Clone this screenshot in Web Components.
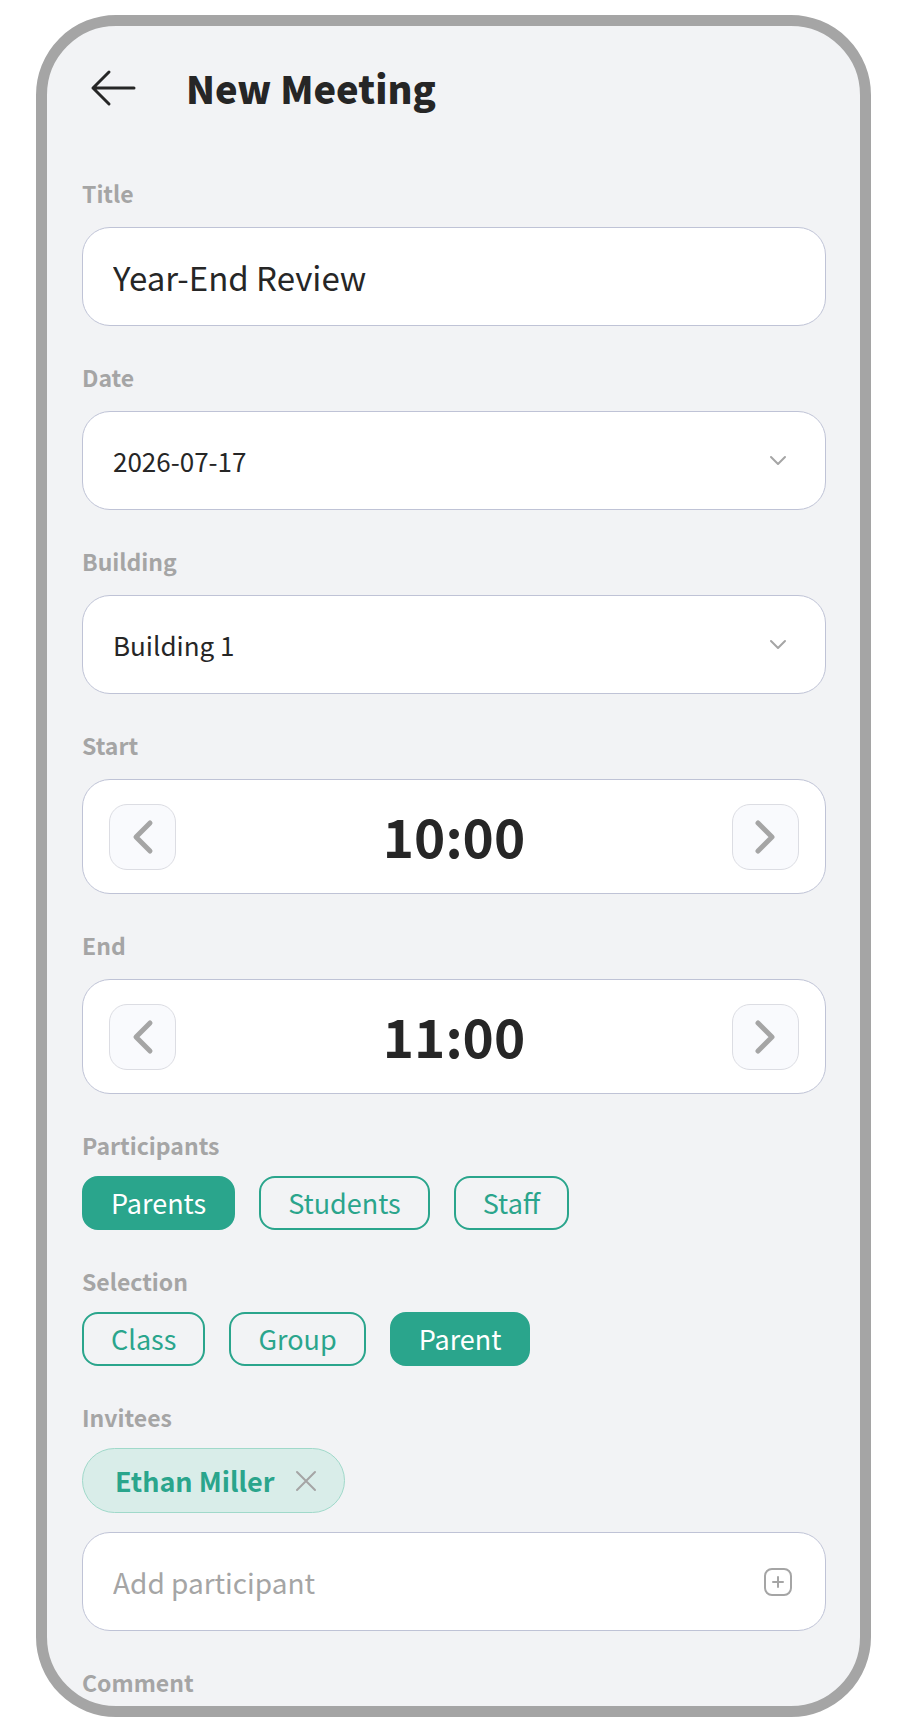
<!DOCTYPE html>
<html lang="en">
<head>
  <meta charset="utf-8">
  <meta name="viewport" content="width=device-width, initial-scale=1">
  <title>New Meeting</title>
  <style>
    body {
      --ink: #262626;
      --muted: #a5a5a5;
      --line: #bfc3d6;
      --accent: #2aa58c;
      --screen: #f2f3f5;
      margin: 0;
      background: #fff;
      color: var(--ink);
      font-family: "Noto Sans CJK SC", "Noto Sans", sans-serif;
    }
  </style>
</head>
<body>
  <phone-frame>
    <screen-header>New Meeting</screen-header>
    <text-field label="Title" value="Year-End Review"></text-field>
    <select-field label="Date" options="2026-07-17,2026-07-18,2026-07-19"></select-field>
    <select-field label="Building" options="Building 1,Building 2"></select-field>
    <time-stepper label="Start" value="10:00"></time-stepper>
    <time-stepper label="End" value="11:00"></time-stepper>
    <chip-group label="Participants">
      <toggle-chip selected>Parents</toggle-chip>
      <toggle-chip>Students</toggle-chip>
      <toggle-chip>Staff</toggle-chip>
    </chip-group>
    <chip-group label="Selection">
      <toggle-chip>Class</toggle-chip>
      <toggle-chip>Group</toggle-chip>
      <toggle-chip selected>Parent</toggle-chip>
    </chip-group>
    <chip-group label="Invitees">
      <invitee-tag>Ethan Miller</invitee-tag>
    </chip-group>
    <add-participant></add-participant>
    <comment-field label="Comment"></comment-field>
  </phone-frame>

  <script>
    // Label and box styles shared by all the form rows
    const fieldStyles = `
      :host {
        display: block;
        margin-top: 33px;
      }

      * {
        box-sizing: border-box;
      }

      .label {
        display: block;
        margin: 0 0 16px;
        color: var(--muted);
        font-size: 23px;
        font-weight: 700;
        line-height: 36px;
      }

      .box {
        display: flex;
        align-items: center;
        height: 99px;
        border: 1px solid var(--line);
        border-radius: 28px;
        background: #fff;
      }

      input, select, textarea, button {
        margin: 0;
        padding: 0;
        border: none;
        background: none;
        color: inherit;
        font-family: inherit;
      }

      button {
        cursor: pointer;
      }

      svg {
        display: block;
        fill: none;
        stroke: var(--muted);
        stroke-linecap: round;
        stroke-linejoin: round;
      }
    `;

    class PhoneFrame extends HTMLElement {
      constructor() {
        super();
        this.attachShadow({ mode: 'open' });
        this.shadowRoot.innerHTML = `
        <style>
          :host {
            display: flex;
            height: 100vh;
            padding: 15px 35px 19px 36px;
            box-sizing: border-box;
          }

          .bezel {
            display: flex;
            flex: 1;
            min-width: 0;
            overflow: hidden;
            border: 11px solid var(--muted);
            border-radius: 80px;
            background: var(--screen);
          }

          main {
            flex: 1;
            min-width: 0;
            padding: 0 34px 40px 35px;
            overflow-y: auto;
            scrollbar-width: none;
          }
        </style>

        <div class="bezel">
          <main><slot></slot></main>
        </div>
        `;
      }
    }
    customElements.define('phone-frame', PhoneFrame);

    class ScreenHeader extends HTMLElement {
      constructor() {
        super();
        this.attachShadow({ mode: 'open' });
        this.shadowRoot.innerHTML = `
        <style>
          :host {
            display: flex;
            align-items: center;
            gap: 50px;
            height: 116px;
            padding: 8px 0 0 6px;
            box-sizing: border-box;
          }

          button {
            padding: 0;
            border: none;
            background: none;
            cursor: pointer;
          }

          svg {
            display: block;
            fill: none;
            stroke: var(--ink);
            stroke-width: 3;
            stroke-linecap: round;
            stroke-linejoin: round;
          }

          h1 {
            margin: 0;
            font-size: 38px;
            font-weight: 900;
            line-height: 56px;
          }
        </style>

        <button type="button" aria-label="Back">
          <svg width="48" height="40" viewBox="0 0 48 40"><path d="M46 20H5M21 4 5 20l16 16"/></svg>
        </button>
        <h1><slot></slot></h1>
        `;
      }
    }
    customElements.define('screen-header', ScreenHeader);

    class TextField extends HTMLElement {
      constructor() {
        super();
        this.attachShadow({ mode: 'open' });
        this.shadowRoot.innerHTML = `
        <style>
          ${fieldStyles}

          input {
            flex: 1;
            min-width: 0;
            height: 100%;
            padding: 0 30px;
            border-radius: 28px;
            font-size: 33px;
          }
        </style>

        <label class="label" for="text">${this.getAttribute('label')}</label>
        <div class="box">
          <input id="text" type="text" value="${this.getAttribute('value')}">
        </div>
        `;
      }
    }
    customElements.define('text-field', TextField);

    class SelectField extends HTMLElement {
      constructor() {
        super();
        this.attachShadow({ mode: 'open' });
        const options = this.getAttribute('options').split(',');
        this.shadowRoot.innerHTML = `
        <style>
          ${fieldStyles}

          .box {
            display: grid;
          }

          select, svg {
            grid-area: 1 / 1;
          }

          select {
            width: 100%;
            height: 97px;
            padding: 0 30px;
            border-radius: 28px;
            font-size: 26px;
            appearance: none;
          }

          svg {
            justify-self: end;
            margin-right: 37px;
            pointer-events: none;
          }
        </style>

        <label class="label" for="choice">${this.getAttribute('label')}</label>
        <div class="box">
          <select id="choice">${options.map((option) => `<option>${option}</option>`).join('')}</select>
          <svg width="20" height="20" viewBox="0 0 20 20" stroke-width="2"><path d="m3 6 7 7 7-7"/></svg>
        </div>
        `;
      }
    }
    customElements.define('select-field', SelectField);

    class TimeStepper extends HTMLElement {
      constructor() {
        super();
        this.attachShadow({ mode: 'open' });
        this.shadowRoot.innerHTML = `
        <style>
          ${fieldStyles}

          .box {
            justify-content: space-between;
            height: 115px;
            padding: 0 26px;
          }

          button {
            display: grid;
            place-items: center;
            width: 67px;
            height: 66px;
            border: 1px solid #dcdde3;
            border-radius: 18px;
            background: #f9fafd;
          }

          output {
            padding-bottom: 4px;
            font-size: 53px;
            font-weight: 700;
            line-height: 72px;
          }
        </style>

        <label class="label" for="time">${this.getAttribute('label')}</label>
        <div class="box">
          <button type="button" aria-label="Earlier">
            <svg width="40" height="40" viewBox="0 0 40 40" stroke-width="5"><path d="M27 6 13 20l14 14"/></svg>
          </button>
          <output id="time">${this.getAttribute('value')}</output>
          <button type="button" aria-label="Later">
            <svg width="40" height="40" viewBox="0 0 40 40" stroke-width="5"><path d="m12 6 14 14-14 14"/></svg>
          </button>
        </div>
        `;
        this.output = this.shadowRoot.querySelector('output');
        const [earlier, later] = this.shadowRoot.querySelectorAll('button');
        earlier.addEventListener('click', () => this.step(-30));
        later.addEventListener('click', () => this.step(30));
      }

      step(minutes) {
        const [h, m] = this.output.value.split(':').map(Number);
        const total = (h * 60 + m + minutes + 1440) % 1440;
        const pad = (n) => String(n).padStart(2, '0');
        this.output.value = `${pad(Math.floor(total / 60))}:${pad(total % 60)}`;
      }
    }
    customElements.define('time-stepper', TimeStepper);

    class ChipGroup extends HTMLElement {
      constructor() {
        super();
        this.attachShadow({ mode: 'open' });
        this.shadowRoot.innerHTML = `
        <style>
          ${fieldStyles}

          .label {
            margin-bottom: 13px;
          }

          .chips {
            display: flex;
            flex-wrap: wrap;
            gap: 24px;
          }
        </style>

        <span class="label" id="name">${this.getAttribute('label')}</span>
        <div class="chips" role="group" aria-labelledby="name"><slot></slot></div>
        `;
      }
    }
    customElements.define('chip-group', ChipGroup);

    class ToggleChip extends HTMLElement {
      constructor() {
        super();
        this.attachShadow({ mode: 'open' });
        this.shadowRoot.innerHTML = `
        <style>
          :host {
            display: block;
          }

          button {
            display: block;
            height: 54px;
            padding: 0 27px;
            border: 2px solid var(--accent);
            border-radius: 16px;
            background: none;
            color: var(--accent);
            font-family: inherit;
            font-size: 27px;
            line-height: 50px;
            cursor: pointer;
          }

          button[aria-pressed="true"] {
            background: var(--accent);
            color: #fff;
          }
        </style>

        <button type="button" aria-pressed="${this.hasAttribute('selected')}"><slot></slot></button>
        `;
        this.onToggle = this.onToggle.bind(this);
      }

      connectedCallback() {
        this.shadowRoot.querySelector('button').addEventListener('click', this.onToggle);
      }

      onToggle() {
        const selected = this.toggleAttribute('selected');
        this.shadowRoot.querySelector('button').setAttribute('aria-pressed', selected);
      }
    }
    customElements.define('toggle-chip', ToggleChip);

    class InviteeTag extends HTMLElement {
      constructor() {
        super();
        this.attachShadow({ mode: 'open' });
        this.shadowRoot.innerHTML = `
        <style>
          :host {
            display: flex;
            align-items: center;
            gap: 20px;
            height: 65px;
            padding: 0 27px 0 32px;
            border: 1px solid #a0d9ca;
            border-radius: 33px;
            box-sizing: border-box;
            background: #d9ede9;
            color: var(--accent);
            font-size: 27px;
            font-weight: 700;
            line-height: 40px;
          }

          button {
            padding: 0;
            border: none;
            background: none;
            cursor: pointer;
          }

          svg {
            display: block;
            fill: none;
            stroke: var(--muted);
            stroke-width: 2;
            stroke-linecap: round;
          }
        </style>

        <span><slot></slot></span>
        <button type="button" aria-label="Remove">
          <svg width="22" height="22" viewBox="0 0 22 22"><path d="m2 2 18 18M20 2 2 20"/></svg>
        </button>
        `;
        this.shadowRoot.querySelector('button').addEventListener('click', () => this.remove());
      }
    }
    customElements.define('invitee-tag', InviteeTag);

    class AddParticipant extends HTMLElement {
      constructor() {
        super();
        this.attachShadow({ mode: 'open' });
        this.shadowRoot.innerHTML = `
        <style>
          ${fieldStyles}

          :host {
            margin-top: 19px;
          }

          .box {
            padding-right: 32px;
          }

          input {
            flex: 1;
            min-width: 0;
            height: 100%;
            padding: 0 30px;
            border-radius: 28px;
            font-size: 28px;
          }

          input::placeholder {
            color: var(--muted);
            opacity: 1;
          }
        </style>

        <div class="box">
          <input type="text" placeholder="Add participant" aria-label="Add participant">
          <button type="button" aria-label="Add">
            <svg width="30" height="30" viewBox="0 0 30 30" stroke-width="2">
              <rect x="2" y="2" width="26" height="26" rx="7"/>
              <path d="M15 10v10M10 15h10"/>
            </svg>
          </button>
        </div>
        `;
      }
    }
    customElements.define('add-participant', AddParticipant);

    class CommentField extends HTMLElement {
      constructor() {
        super();
        this.attachShadow({ mode: 'open' });
        this.shadowRoot.innerHTML = `
        <style>
          ${fieldStyles}

          .box {
            height: 180px;
          }

          textarea {
            flex: 1;
            height: 100%;
            padding: 24px 30px;
            border-radius: 28px;
            font-size: 26px;
            resize: none;
          }
        </style>

        <label class="label" for="comment">${this.getAttribute('label')}</label>
        <div class="box">
          <textarea id="comment"></textarea>
        </div>
        `;
      }
    }
    customElements.define('comment-field', CommentField);
  </script>
</body>
</html>
